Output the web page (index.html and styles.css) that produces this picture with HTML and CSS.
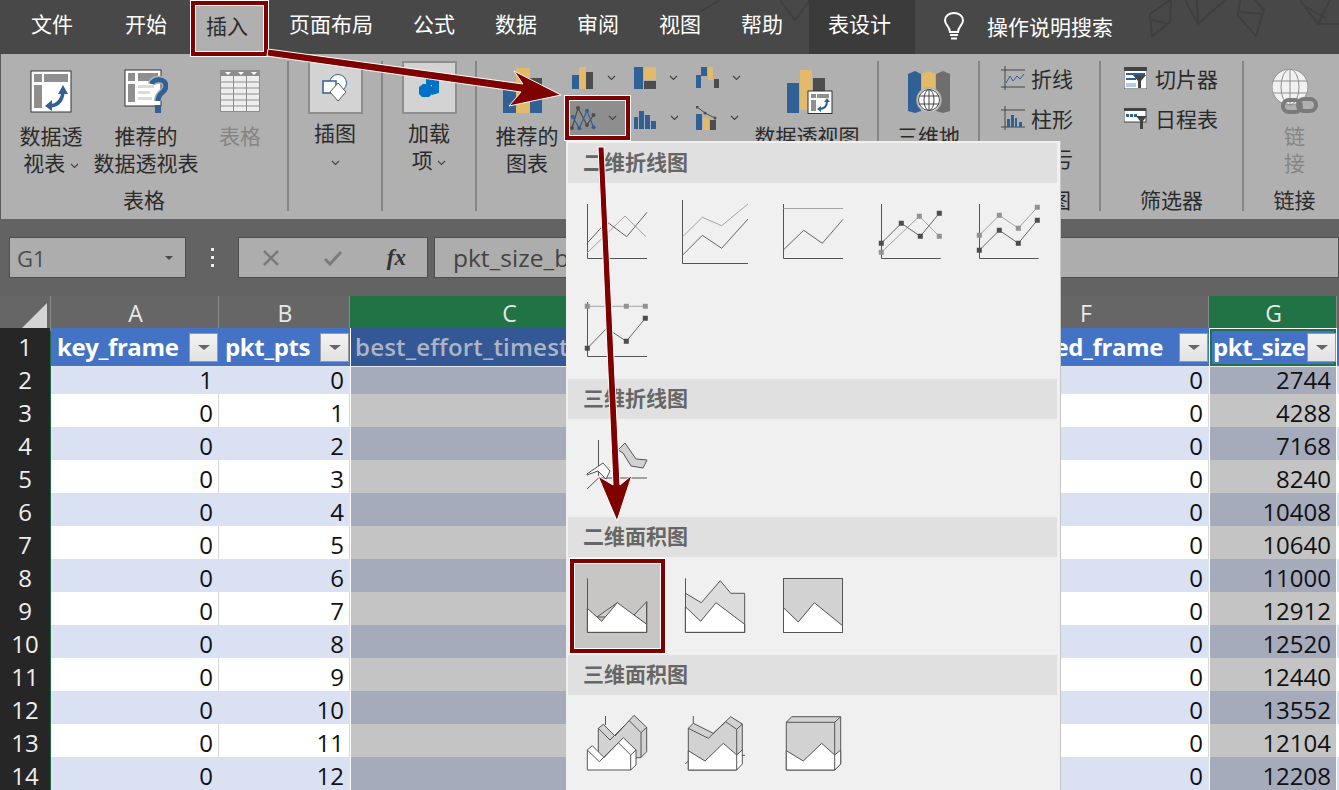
FILE: index.html
```html
<!DOCTYPE html>
<html lang="en">

<head>
    <meta charset="UTF-8">
    <meta name="viewport" content="width=device-width, initial-scale=1.0">
    <title>插入面积图</title>
    <link rel="stylesheet" href="styles.css">
</head>

<body>
    <div class="menu">
        <svg class="menu-art" width="1339" height="54" viewBox="0 0 1339 54">
            <g fill="none" stroke="#3f3f3f" stroke-width="2">
                <path d="M1150 14 L1170 0 M1150 14 L1152 36 L1170 22 L1171 0 M1152 20 L1168 24" />
                <path d="M1185 0 L1198 24 L1225 0 M1198 24 L1197 0" />
                <path d="M1240 0 L1238 16 L1256 36 L1264 10 L1255 0 M1240 12 L1262 14" />
                <path d="M1300 0 L1318 24 L1339 24 M1318 24 L1330 0 M1305 6 L1325 18" />
                <path d="M780 0 L795 20 L810 0 M700 12 L720 0" />
            </g>
        </svg>
        <div class="tab tab-file">文件</div>
        <div class="tab">开始</div>
        <div class="tab">插入</div>
        <div class="tab">页面布局</div>
        <div class="tab">公式</div>
        <div class="tab">数据</div>
        <div class="tab">审阅</div>
        <div class="tab">视图</div>
        <div class="tab">帮助</div>
        <div class="tab tab-active">表设计</div>
        <div class="search">
            <svg width="22" height="29" viewBox="0 0 22 29" fill="none" stroke="#fff" stroke-width="2">
                <path d="M7 20 C7 15 2 13 2 8.500 C2 4 6 1 11 1 C16 1 20 4 20 8.500 C20 13 15 15 15 20 Z" />
                <path d="M7 23 H15 M8 26.500 H14" />
            </svg>
            <span>操作说明搜索</span>
        </div>
    </div>

    <div class="ribbon">
        <div class="group group-table">
            <div class="group-body">
                <div class="big-btn btn-pivot">
                    <div class="big-icon">
                        <svg width="42" height="43" viewBox="0 0 42 43">
                            <rect x="1" y="1" width="40" height="41" fill="#fff" stroke="#333" />
                            <path d="M4 4 H12 V12 H4 Z M14 4 H38 V12 H14 Z M4 15 H12 V38 H4 Z" fill="#8f8f8f" />
                            <path d="M18 36 C26 36 32 32 33 22" fill="none" stroke="#2f6196" stroke-width="3.500" />
                            <path d="M28 24 L33 15 L38 24 Z M22 30 L15 36 L22 41 Z" fill="#2f6196" />
                        </svg>
                    </div>
                    <div class="big-label">数据透<br>视表 <svg class="chev" width="9" height="6" viewBox="0 0 9 6"><path d="M1 1 L4.500 4.500 L8 1" /></svg></div>
                </div>
                <div class="big-btn btn-recommend">
                    <div class="big-icon">
                        <svg width="44" height="46" viewBox="0 0 44 46">
                            <rect x="1" y="1" width="36" height="36" fill="#fff" stroke="#333" />
                            <path d="M4 4 H11 V12 H4 Z M14 4 H34 V12 H14 Z M4 15 H11 V33 H4 Z" fill="#8f8f8f" />
                            <path d="M14 16 H30 V19 H14 Z M14 22 H26 V25 H14 Z M14 28 H28 V31 H14 Z" fill="#dadada" />
                            <path d="M28 15 C29 9 42 9 42 17 C42 24 34 23 34 32" fill="none" stroke="#b0b0b0" stroke-width="8" />
                            <path d="M28 15 C29 9 42 9 42 17 C42 24 34 23 34 32" fill="none" stroke="#2f6196" stroke-width="5" />
                            <rect x="31" y="36" width="6" height="8" fill="#2f6196" />
                        </svg>
                    </div>
                    <div class="big-label">推荐的<br>数据透视表</div>
                </div>
                <div class="big-btn btn-plain is-disabled">
                    <div class="big-icon">
                        <svg width="40" height="43" viewBox="0 0 40 43">
                            <rect x="0" y="0" width="40" height="42" fill="#8c8c8c" />
                            <rect x="1" y="6" width="38" height="35" fill="#eee" />
                            <path d="M13.500 6 V41 M26.500 6 V41 M1 12 H39 M1 18 H39 M1 24 H39 M1 30 H39 M1 36 H39" stroke="#8c8c8c" fill="none" />
                            <path d="M5 2 H11 L8 5 Z M18 2 H24 L21 5 Z M31 2 H37 L34 5 Z" fill="#fff" />
                        </svg>
                    </div>
                    <div class="big-label">表格</div>
                </div>
            </div>
            <div class="group-label">表格</div>
        </div>

        <div class="group group-illus">
            <div class="group-body">
                <div class="big-btn">
                    <div class="big-icon tall">
                        <div class="box-btn">
                            <svg width="26" height="28" viewBox="0 0 26 28">
                                <circle cx="16" cy="9" r="8.500" fill="#fff" stroke="#2f6196" />
                                <rect x="1" y="7" width="13" height="12" fill="#fff" stroke="#2f6196" stroke-width="1.500" />
                                <path d="M16 9 L24 18 L16 27 L8 18 Z" fill="#fff" stroke="#555" stroke-width="1" />
                            </svg>
                        </div>
                    </div>
                    <div class="big-label">插图<br><svg class="chev" width="9" height="6" viewBox="0 0 9 6"><path d="M1 1 L4.500 4.500 L8 1" /></svg></div>
                </div>
            </div>
        </div>

        <div class="group group-addin">
            <div class="group-body">
                <div class="big-btn">
                    <div class="big-icon tall">
                        <div class="box-btn">
                            <svg width="22" height="20" viewBox="0 0 22 20">
                                <path d="M8 1 H21 V15 L14 17 V7 H8 Z" fill="#0072c6" />
                                <path d="M5 6 H12 L14 9 V16 L11 19 H4 L1 16 V9 Z" fill="#0072c6" />
                            </svg>
                        </div>
                    </div>
                    <div class="big-label">加载<br>项 <svg class="chev" width="9" height="6" viewBox="0 0 9 6"><path d="M1 1 L4.500 4.500 L8 1" /></svg></div>
                </div>
            </div>
        </div>

        <div class="group group-charts">
            <div class="group-body">
                <div class="big-btn btn-recchart">
                    <div class="big-icon">
                        <svg width="48" height="48" viewBox="0 0 48 48">
                            <rect x="0" y="18" width="13" height="27" fill="#2f6196" />
                            <rect x="13" y="0" width="14" height="45" fill="#e3b96a" />
                            <rect x="27" y="10" width="12" height="35" fill="#4d4d4d" />
                            <rect x="27" y="28" width="12" height="17" fill="#2f6196" />
                        </svg>
                    </div>
                    <div class="big-label">推荐的<br>图表</div>
                </div>
                <div class="chart-types">
                    <div class="type-btn">
                        <svg width="22" height="22" viewBox="0 0 22 22"><rect x="0" y="8" width="7" height="14" fill="#2f6196" /><rect x="7" y="0" width="7" height="22" fill="#e3b96a" /><rect x="14" y="5" width="7" height="17" fill="#4d4d4d" /></svg>
                        <svg class="chev" width="9" height="6" viewBox="0 0 9 6"><path d="M1 1 L4.500 4.500 L8 1" /></svg>
                    </div>
                    <div class="type-btn">
                        <svg width="22" height="22" viewBox="0 0 22 22"><rect x="0" y="0" width="9" height="22" fill="#2f6196" /><rect x="10" y="0" width="12" height="13" fill="#e3b96a" /><rect x="10" y="14" width="12" height="8" fill="#4d4d4d" /></svg>
                        <svg class="chev" width="9" height="6" viewBox="0 0 9 6"><path d="M1 1 L4.500 4.500 L8 1" /></svg>
                    </div>
                    <div class="type-btn">
                        <svg width="23" height="22" viewBox="0 0 23 22"><rect x="0" y="8" width="5" height="13" fill="#2f6196" /><rect x="5" y="0" width="6" height="9" fill="#2f6196" /><rect x="12" y="0" width="5" height="13" fill="#e3b96a" /><rect x="18" y="12" width="5" height="9" fill="#4d4d4d" /></svg>
                        <svg class="chev" width="9" height="6" viewBox="0 0 9 6"><path d="M1 1 L4.500 4.500 L8 1" /></svg>
                    </div>
                    <div class="type-btn type-picked">
                        <svg width="26" height="25" viewBox="0 0 26 25" fill="none">
                            <path d="M2 22 L8 2 L17 19 L23.500 9" stroke="#4d4d4d" stroke-width="1.200" />
                            <path d="M2.700 10.700 L9.300 22.300 L17 4.700 L23.500 21.300" stroke="#2f6196" stroke-width="1.200" />
                            <g fill="#4d4d4d"><circle cx="2" cy="22" r="2" /><circle cx="8" cy="2" r="2" /><circle cx="17" cy="19" r="2" /><circle cx="23.500" cy="9" r="2" /></g>
                            <g fill="#2f6196"><circle cx="2.700" cy="10.700" r="2" /><circle cx="9.300" cy="22.300" r="2" /><circle cx="17" cy="4.700" r="2" /><circle cx="23.500" cy="21.300" r="2" /></g>
                        </svg>
                        <svg class="chev" width="9" height="6" viewBox="0 0 9 6"><path d="M1 1 L4.500 4.500 L8 1" /></svg>
                    </div>
                    <div class="type-btn">
                        <svg width="23" height="22" viewBox="0 0 23 22" fill="#2f6196"><rect x="0" y="10" width="4" height="12" /><rect x="5" y="4" width="5" height="18" /><rect x="11" y="8" width="5" height="14" /><rect x="17" y="14" width="5" height="8" /></svg>
                        <svg class="chev" width="9" height="6" viewBox="0 0 9 6"><path d="M1 1 L4.500 4.500 L8 1" /></svg>
                    </div>
                    <div class="type-btn">
                        <svg width="21" height="24" viewBox="0 0 21 24"><rect x="0" y="8" width="6" height="16" fill="#2f6196" /><rect x="7" y="12" width="6" height="12" fill="#e3b96a" /><rect x="14" y="14" width="6" height="10" fill="#4d4d4d" /><path d="M1 1 L9 7 L19 12" stroke="#4d4d4d" fill="none" /><circle cx="1" cy="1" r="1.500" fill="#4d4d4d" /><circle cx="9" cy="7" r="1.500" fill="#4d4d4d" /><circle cx="19" cy="12" r="1.500" fill="#4d4d4d" /></svg>
                        <svg class="chev" width="9" height="6" viewBox="0 0 9 6"><path d="M1 1 L4.500 4.500 L8 1" /></svg>
                    </div>
                </div>
                <div class="big-btn btn-pivotchart">
                    <div class="big-icon">
                        <svg width="46" height="44" viewBox="0 0 46 44">
                            <rect x="0" y="13" width="12" height="30" fill="#2f6196" />
                            <rect x="13" y="0" width="12" height="40" fill="#e3b96a" />
                            <rect x="26" y="8" width="12" height="20" fill="#4d4d4d" />
                            <rect x="21" y="21" width="24" height="22.500" fill="#fff" stroke="#333" />
                            <path d="M24 24 H29 V28 H24 Z M30 24 H42 V28 H30 Z M24 30 H29 V41 H24 Z" fill="#8f8f8f" />
                            <path d="M32 39 C37 39 40 36 40 31" fill="none" stroke="#2f6196" stroke-width="2" />
                            <path d="M37 32 L40 28 L43 32 Z M34 36 L30 39 L34 42 Z" fill="#2f6196" />
                        </svg>
                    </div>
                    <div class="big-label">数据透视图</div>
                </div>
            </div>
        </div>

        <div class="group group-map">
            <div class="group-body">
                <div class="big-btn">
                    <div class="big-icon">
                        <svg width="42" height="43" viewBox="0 0 42 43">
                            <path d="M0 4 L7 1 L13 4 V41 L7 43 L0 41 Z" fill="#2f6196" />
                            <path d="M14 4 L20 1 L27 4 V30 H14 Z" fill="#e3b96a" />
                            <path d="M28 4 L35 1 L42 4 V41 L35 43 L28 41 Z" fill="#6e6e6e" />
                            <circle cx="21" cy="30" r="12" fill="#fff" stroke="#b0b0b0" stroke-width="1.500" />
                            <g fill="none" stroke="#444">
                                <circle cx="21" cy="30" r="10.500" />
                                <ellipse cx="21" cy="30" rx="5" ry="10.500" />
                                <path d="M21 19.500 V40.500 M11 26 H31 M11 34 H31" />
                            </g>
                        </svg>
                    </div>
                    <div class="big-label">三维地</div>
                </div>
            </div>
        </div>

        <div class="group group-spark">
            <div class="group-body">
                <div class="list-col">
                    <div class="list-btn">
                        <svg width="24" height="24" viewBox="0 0 24 24" fill="none"><path d="M0 4 H24 M0 21 H24 M4 0 V24" stroke="#444" /><path d="M5 17 L9 10 L12 15 L16 10 L19 13 L23 8" stroke="#2f6196" /></svg>
                        <span>折线</span>
                    </div>
                    <div class="list-btn">
                        <svg width="24" height="24" viewBox="0 0 24 24"><path d="M0 4 H24 M0 21 H24 M4 0 V24" stroke="#444" fill="none" /><path d="M6 13 H9 V21 H6 Z M10 9 H13 V21 H10 Z M14 12 H16 V21 H14 Z M18 16 H21 V21 H18 Z" fill="#2f6196" /></svg>
                        <span>柱形</span>
                    </div>
                    <div class="list-btn">
                        <svg width="24" height="24" viewBox="0 0 24 24"><path d="M0 12 H24 M4 0 V24" stroke="#444" fill="none" /></svg>
                        <span>盈亏</span>
                    </div>
                </div>
            </div>
            <div class="group-label">迷你图</div>
        </div>

        <div class="group group-filter">
            <div class="group-body">
                <div class="list-col">
                    <div class="list-btn">
                        <svg width="23" height="22" viewBox="0 0 23 22">
                            <rect x="0" y="0" width="23" height="22" fill="#fff" stroke="#444" />
                            <rect x="0" y="0" width="23" height="4" fill="#444" />
                            <path d="M2 6 H21 V8 H2 Z M2 11 H12 V13 H2 Z" fill="#2f6196" />
                            <path d="M2 16 H12 V20 H2 Z" fill="#b5cbe0" />
                            <path d="M9 8 H22 L17 14 V21 H14 V14 Z" fill="#444" />
                        </svg>
                        <span>切片器</span>
                    </div>
                    <div class="list-btn">
                        <svg width="23" height="22" viewBox="0 0 23 22">
                            <rect x="0" y="2" width="22" height="13" fill="#fff" stroke="#444" />
                            <rect x="0" y="1" width="22" height="3" fill="#444" />
                            <path d="M2 7 H5 V10 H2 Z M6 7 H9 V10 H6 Z M10 7 H13 V10 H10 Z" fill="#2f6196" />
                            <path d="M12 9 H23 L19 14 V22 H16 V14 Z" fill="#444" />
                        </svg>
                        <span>日程表</span>
                    </div>
                </div>
            </div>
            <div class="group-label">筛选器</div>
        </div>

        <div class="group group-link">
            <div class="group-body">
                <div class="big-btn is-disabled">
                    <div class="big-icon">
                        <svg width="46" height="46" viewBox="0 0 46 46">
                            <circle cx="18" cy="18" r="18" fill="#f1f1f1" stroke="#8f8f8f" />
                            <g fill="none" stroke="#8f8f8f">
                                <ellipse cx="18" cy="18" rx="9" ry="18" />
                                <path d="M18 0 V36 M1 12 H35 M1 24 H35" />
                            </g>
                            <g fill="none" stroke="#7a7a7a" stroke-width="4">
                                <rect x="11" y="31" width="18" height="12" rx="6" />
                                <rect x="26" y="30" width="18" height="12" rx="6" />
                            </g>
                        </svg>
                    </div>
                    <div class="big-label">链<br>接</div>
                </div>
            </div>
            <div class="group-label">链接</div>
        </div>
    </div>

    <div class="formula-bar">
        <div class="name-box">
            <span>G1</span>
            <i class="caret"></i>
        </div>
        <div class="dots"><i></i><i></i><i></i></div>
        <div class="fx-box">
            <svg width="16" height="16" viewBox="0 0 16 16"><path d="M1 1 L15 15 M15 1 L1 15" stroke="#7c7c7c" stroke-width="2.500" /></svg>
            <svg width="20" height="16" viewBox="0 0 20 16"><path d="M2 9 L7 14 L18 2" stroke="#7c7c7c" stroke-width="3" fill="none" /></svg>
            <span class="fx">fx</span>
        </div>
        <div class="formula-input">pkt_size_bytes</div>
    </div>

    <div class="sheet">
        <div class="row col-heads">
            <div class="corner"><i></i></div>
            <div>A</div>
            <div>B</div>
            <div class="is-sel">C</div>
            <div>D</div>
            <div>E</div>
            <div>F</div>
            <div class="is-sel">G</div>
            <div></div>
        </div>
        <div class="row table-head">
            <div class="num">1</div>
            <div class="th"><span>key_frame</span><i class="filter"></i></div>
            <div class="th"><span>pkt_pts</span><i class="filter"></i></div>
            <div class="th th-sel"><span>best_effort_timestamp</span></div>
            <div class="th th-sel"></div>
            <div class="th"></div>
            <div class="th th-f"><span>interlaced_frame</span><i class="filter"></i></div>
            <div class="th th-active"><span>pkt_size</span><i class="filter"></i></div>
            <div class="th"></div>
        </div>
        <div class="row data"><div class="num">2</div><div>1</div><div>0</div><div class="c"></div><div></div><div></div><div>0</div><div class="g">2744</div><div></div></div>
        <div class="row data"><div class="num">3</div><div>0</div><div>1</div><div class="c"></div><div></div><div></div><div>0</div><div class="g">4288</div><div></div></div>
        <div class="row data"><div class="num">4</div><div>0</div><div>2</div><div class="c"></div><div></div><div></div><div>0</div><div class="g">7168</div><div></div></div>
        <div class="row data"><div class="num">5</div><div>0</div><div>3</div><div class="c"></div><div></div><div></div><div>0</div><div class="g">8240</div><div></div></div>
        <div class="row data"><div class="num">6</div><div>0</div><div>4</div><div class="c"></div><div></div><div></div><div>0</div><div class="g">10408</div><div></div></div>
        <div class="row data"><div class="num">7</div><div>0</div><div>5</div><div class="c"></div><div></div><div></div><div>0</div><div class="g">10640</div><div></div></div>
        <div class="row data"><div class="num">8</div><div>0</div><div>6</div><div class="c"></div><div></div><div></div><div>0</div><div class="g">11000</div><div></div></div>
        <div class="row data"><div class="num">9</div><div>0</div><div>7</div><div class="c"></div><div></div><div></div><div>0</div><div class="g">12912</div><div></div></div>
        <div class="row data"><div class="num">10</div><div>0</div><div>8</div><div class="c"></div><div></div><div></div><div>0</div><div class="g">12520</div><div></div></div>
        <div class="row data"><div class="num">11</div><div>0</div><div>9</div><div class="c"></div><div></div><div></div><div>0</div><div class="g">12440</div><div></div></div>
        <div class="row data"><div class="num">12</div><div>0</div><div>10</div><div class="c"></div><div></div><div></div><div>0</div><div class="g">13552</div><div></div></div>
        <div class="row data"><div class="num">13</div><div>0</div><div>11</div><div class="c"></div><div></div><div></div><div>0</div><div class="g">12104</div><div></div></div>
        <div class="row data"><div class="num">14</div><div>0</div><div>12</div><div class="c"></div><div></div><div></div><div>0</div><div class="g">12208</div><div></div></div>
    </div>

    <!-- Chart type dropdown -->
    <div class="dropdown">
        <div class="drop-title">二维折线图</div>
        <div class="drop-grid">
            <div class="drop-item">
                <svg viewBox="0 0 98 98">
                    <path class="axis" d="M19.500 21 V75.500 H79" />
                    <path class="ln-light" d="M19 70 L57 33 L78 53.700" />
                    <path class="ln-dark" d="M19 60.300 L38.700 38.700 L58.700 53.700 L79 29.300" />
                </svg>
            </div>
            <div class="drop-item">
                <svg viewBox="0 0 98 98">
                    <path class="axis" d="M16.500 17 V80.500 H82" />
                    <path class="ln-light" d="M16.700 53.700 L36.300 34.300 L55.700 42.700 L82 21" />
                    <path class="ln-dark" d="M16.700 72 L36.300 52.300 L55.700 65.300 L82 36" />
                </svg>
            </div>
            <div class="drop-item">
                <svg viewBox="0 0 98 98">
                    <path class="axis" d="M19.500 21 V75.500 H79" />
                    <path class="ln-light" d="M19.500 25.500 H79" />
                    <path class="ln-dark" d="M19.300 67 L39.700 47.300 L58.300 60.300 L79 36.300" />
                </svg>
            </div>
            <div class="drop-item">
                <svg viewBox="0 0 98 98">
                    <path class="axis" d="M19.500 21 V75.500 H78.700" />
                    <path class="ln-light" d="M19.300 69.300 L57.300 33.300 L77.300 53.300" />
                    <path class="ln-dark" d="M19.300 60.300 L39.300 40.300 L58.300 53.300 L77.300 30.300" />
                    <path class="dot-light" d="M16.800 66.800 h5 v5 h-5 Z M54.800 30.800 h5 v5 h-5 Z M74.800 50.800 h5 v5 h-5 Z" />
                    <path class="dot-dark" d="M16.800 57.800 h5 v5 h-5 Z M36.800 37.800 h5 v5 h-5 Z M55.800 50.800 h5 v5 h-5 Z M74.800 27.800 h5 v5 h-5 Z" />
                </svg>
            </div>
            <div class="drop-item">
                <svg viewBox="0 0 98 98">
                    <path class="axis" d="M19.500 21 V75.500 H78.700" />
                    <path class="ln-light" d="M19.300 52.300 L39.300 32.300 L58.300 45.300 L77.300 24.300" />
                    <path class="ln-dark" d="M19.300 67.300 L39.300 47.300 L58.300 60.300 L77.300 37.300" />
                    <path class="dot-light" d="M16.800 49.800 h5 v5 h-5 Z M36.800 29.800 h5 v5 h-5 Z M55.800 42.800 h5 v5 h-5 Z M74.800 21.800 h5 v5 h-5 Z" />
                    <path class="dot-dark" d="M16.800 64.800 h5 v5 h-5 Z M36.800 44.800 h5 v5 h-5 Z M55.800 57.800 h5 v5 h-5 Z M74.800 34.800 h5 v5 h-5 Z" />
                </svg>
            </div>
            <div class="drop-item">
                <svg viewBox="0 0 98 98">
                    <path class="axis" d="M19.500 21 V75.500 H79" />
                    <path class="ln-light" d="M19.300 25.300 H77.300" />
                    <path class="ln-dark" d="M19.300 67.300 L38.700 47.300 L58.300 60.300 L77.300 37.300" />
                    <path class="dot-light" d="M16.800 22.800 h5 v5 h-5 Z M55.800 22.800 h5 v5 h-5 Z M74.800 22.800 h5 v5 h-5 Z" />
                    <path class="dot-dark" d="M16.800 64.800 h5 v5 h-5 Z M55.800 57.800 h5 v5 h-5 Z M74.800 34.800 h5 v5 h-5 Z" />
                </svg>
            </div>
        </div>

        <div class="drop-title">三维折线图</div>
        <div class="drop-grid">
            <div class="drop-item">
                <svg viewBox="0 0 98 98">
                    <path class="axis" d="M30.500 21 V59 H79 M30.500 59 L19 70" />
                    <path class="area-mid" d="M50 31 L57 24 L68 40 L79 41 L75 49 L63 47 L55 34 Z" />
                    <path class="area-white" d="M19 55 L35 44 L42 52 L38 60 L30 52 L19 56 Z" />
                </svg>
            </div>
        </div>

        <div class="drop-title">二维面积图</div>
        <div class="drop-grid">
            <div class="drop-item is-picked">
                <svg viewBox="0 0 98 98">
                    <path class="area-mid" d="M29 60 L49.300 45.700 L38 60 Z M66 58 L78.700 44.700 V67.300 Z" />
                    <path class="area-white" d="M19.300 51.300 L33.700 64.300 L49.300 45.700 L78.700 67.300 V75.300 H19.300 Z" />
                    <path class="axis" d="M19.500 21.300 V75.500 H78.700 V44.700" />
                </svg>
            </div>
            <div class="drop-item">
                <svg viewBox="0 0 98 98">
                    <path class="area-light" d="M19.300 36.300 L35.300 45.700 L54.300 23.700 L64.700 36.300 H78.700 V67.300 L50 45.700 L34.700 64.300 L19.300 49.700 Z" />
                    <path class="area-white" d="M19.300 49.700 L34.700 64.300 L50 45.700 L78.700 67.300 V75.300 H19.300 Z" />
                    <path class="axis" d="M19.500 21.300 V75.500 H78.700 V36.300 H64.700 L54.300 23.700 L35.300 45.700 L19.500 36.300" />
                </svg>
            </div>
            <div class="drop-item">
                <svg viewBox="0 0 98 98">
                    <rect class="area-mid" x="19.500" y="21.500" width="59" height="54" />
                    <path class="area-white" d="M19.500 50.700 L34.300 65 L50.300 45.700 L78.500 68.700 V75.500 H19.500 Z" />
                </svg>
            </div>
        </div>

        <div class="drop-title">三维面积图</div>
        <div class="drop-grid">
            <div class="drop-item">
                <svg viewBox="0 0 98 98">
                    <path class="axis" d="M37.500 21 V30" />
                    <path class="area-mid" d="M30.300 33.300 L35.300 29.300 L47 41 L66 20.300 L78.700 32.300 V56.700 L72.700 62.700 H30.300 Z" />
                    <path class="axis" d="M30.300 33.300 L42 45 L61.300 25.700 L73 37.700 V62.700 M78.700 32.300 L73 37.700" />
                    <path class="area-white" d="M19.300 55 L24.300 50.700 L36 62.500 L55.300 42.700 L68 55 V70 L62.700 75 H19.300 Z" />
                    <path class="axis" d="M19.300 55 L31.300 66.700 L50.300 47.700 L62.700 60 V75 M68 55 L62.700 60" />
                </svg>
            </div>
            <div class="drop-item">
                <svg viewBox="0 0 98 98">
                    <path class="axis" d="M27.300 21 V28.300 M19.300 69 L22.300 66 M76.300 60.300 H79" />
                    <path class="area-mid" d="M22.300 33.300 L27.300 28.300 L47.300 38.300 L64.700 21.700 L76.300 29 V55 L70.700 60 V75 H22.300 Z" />
                    <path class="axis" d="M22.300 33.300 L42.300 43.300 L59.700 26.700 L70.700 34.300 V60 M76.300 29 L70.700 34.300" />
                    <path class="area-white" d="M22.300 55.700 L39 66 L57.300 48.300 L70.700 60 L76.300 55 V69 L70.700 75 H22.300 Z" />
                    <path class="axis" d="M70.700 60 V75" />
                </svg>
            </div>
            <div class="drop-item">
                <svg viewBox="0 0 98 98">
                    <path class="area-mid" d="M22.300 27.300 L27.700 21.700 H76.700 V69 L70.700 75 H22.300 Z" />
                    <path class="axis" d="M22.300 27.300 H70.700 V75 M70.700 27.300 L76.700 21.700" />
                    <path class="area-white" d="M22.300 55.700 L39.300 66 L57.700 48.300 L70.700 60 L76.700 55 V69 L70.700 75 H22.300 Z" />
                    <path class="axis" d="M70.700 60 V75" />
                </svg>
            </div>
        </div>
    </div>

    <!-- Callouts drawn over the screenshot -->
    <div class="mark mark-tab">插入</div>
    <svg class="arrows" width="1339" height="790" viewBox="0 0 1339 790">
        <path class="arrow" d="M268 49 L523 84 L514 71 L561 95 L509 106 L521 92 L267 56 Z" />
        <path class="arrow" d="M598 147 L604 147 L620 485 L632 475 L617 521 L598 476 L613 485 Z" />
    </svg>
</body>

</html>
```

FILE: styles.css
```css
* {
    margin: 0;
    padding: 0;
    box-sizing: border-box;
}

html,
body {
    width: 1339px;
    height: 790px;
    overflow: hidden;
}

body {
    position: relative;
    background: #636363;
    font-family: "Noto Sans CJK SC", "Noto Sans", sans-serif;
    font-size: 21px;
    color: #2b2b2b;
}

/* Menu bar */
.menu {
    position: relative;
    display: flex;
    align-items: stretch;
    height: 54px;
    background: #484848;
    color: #fff;
}

.menu-art {
    position: absolute;
    top: 0;
    left: 0;
}

.tab {
    position: relative;
    padding: 0 20px;
    line-height: 47px;
}

.tab-file {
    padding: 0 32px 0 31px;
}

.tab-active {
    margin-left: 6px;
    padding: 0 24px 0 19px;
    background: #3b3b3b;
}

.search {
    position: relative;
    display: flex;
    align-items: center;
    gap: 22px;
    margin-left: 28px;
    padding-bottom: 2px;
}

/* Ribbon */
.ribbon {
    display: flex;
    height: 165px;
    padding: 7px 0 8px;
    background: #b0b0b0;
    border-left: 1px solid #5a5a5a;
}

.group {
    display: flex;
    flex-direction: column;
    height: 150px;
    border-right: 2px solid #868686;
}

.group-body {
    display: flex;
    flex: 1;
    min-height: 0;
}

.group-label {
    height: 20px;
    line-height: 16px;
    text-align: center;
}

.group-table { width: 288px; }
.group-illus { width: 94px; }
.group-addin { width: 94px; }
.group-charts { width: 402px; }
.group-map { width: 101px; }
.group-spark { width: 121px; }
.group-filter { width: 143px; }
.group-link { width: 95px; padding-left: 6px; border-right: none; }

.big-btn {
    display: flex;
    flex-direction: column;
    align-items: center;
    flex: 1;
}

.big-icon {
    display: flex;
    justify-content: center;
    align-items: center;
    height: 61px;
    flex: none;
}

.big-icon.tall {
    height: 58px;
    align-items: flex-start;
}

.big-label {
    line-height: 27px;
    text-align: center;
    white-space: nowrap;
}

.is-disabled .big-label {
    color: #858585;
}

.chev {
    fill: none;
    stroke: #444;
    stroke-width: 1.200;
    vertical-align: 2px;
}

.btn-pivot { flex: none; width: 92px; margin-left: 4px; }
.btn-recommend { flex: none; width: 106px; margin-left: -4px; }
.btn-plain { flex: none; width: 70px; margin-left: 6px; }

.box-btn {
    display: flex;
    justify-content: center;
    align-items: center;
    width: 55px;
    height: 53px;
    background: #d3d3d3;
    border: 2px solid #8e8e8e;
}

.btn-recchart { flex: none; width: 88px; padding-left: 12px; }

.chart-types {
    display: grid;
    grid-template-columns: repeat(3, 62px);
    grid-auto-rows: 34px;
    row-gap: 6px;
    flex: none;
    width: 186px;
    align-content: start;
}

.type-btn {
    position: relative;
    display: flex;
    align-items: center;
    gap: 13px;
    padding-left: 7px;
}

.type-picked {
    height: 44px;
    margin: -5px -3px 0 0;
    padding-left: 1px;
    gap: 12px;
    background: #8e8e8e;
    border: 4px solid #7f0000;
    outline: 1px solid #fff;
    box-shadow: inset 0 0 0 1px #fff;
    z-index: 2;
}

.btn-pivotchart { flex: none; width: 112px; }
.btn-pivotchart .big-icon { padding-left: 6px; }

.list-col {
    display: flex;
    flex-direction: column;
    gap: 6px;
}

.list-btn {
    display: flex;
    align-items: center;
    gap: 6px;
    height: 34px;
    white-space: nowrap;
}

.group-spark .list-col { padding-left: 21px; }
.group-filter .list-col { padding-left: 23px; }
.group-filter .list-btn { gap: 8px; }

/* Formula bar */
.formula-bar {
    display: flex;
    align-items: center;
    height: 77px;
    padding: 0 0 0 9px;
    background: #636363;
}

.name-box {
    display: flex;
    justify-content: space-between;
    align-items: center;
    width: 177px;
    height: 41px;
    padding: 0 12px 0 7px;
    background: #adadad;
    border: 1px solid #4e4e4e;
    font-family: "Open Sans", sans-serif;
    font-size: 22px;
    color: #4c4c4c;
}

.caret {
    width: 0;
    height: 0;
    border-left: 4px solid transparent;
    border-right: 4px solid transparent;
    border-top: 4px solid #4a4a4a;
}

.dots {
    display: flex;
    flex-direction: column;
    gap: 5px;
    width: 52px;
    align-items: center;
}

.dots i {
    width: 3px;
    height: 3px;
    background: #eee;
}

.fx-box {
    display: flex;
    align-items: center;
    justify-content: space-between;
    width: 190px;
    height: 41px;
    padding: 0 21px 0 24px;
    background: #adadad;
    border: 1px solid #4e4e4e;
}

.fx {
    font-family: "Liberation Serif", serif;
    font-style: italic;
    font-weight: bold;
    font-size: 23px;
    color: #333;
}

.formula-input {
    flex: 1;
    height: 41px;
    margin-left: 6px;
    padding-left: 18px;
    line-height: 39px;
    background: #adadad;
    border: 1px solid #4e4e4e;
    font-family: "Open Sans", sans-serif;
    font-size: 24.500px;
    color: #444;
}

/* Sheet */
.row {
    display: grid;
    grid-template-columns: 51px 168px 131px 318px 147px 147px 247px 128px 2px;
    height: 33px;
}

.col-heads {
    height: 32px;
    background: #666;
    color: #e8e8e8;
    font-family: "Open Sans", sans-serif;
    font-size: 23px;
    line-height: 35px;
    text-align: center;
}

.col-heads > div {
    padding-left: 2px;
    border-right: 1px solid #8a8a8a;
}

.col-heads .is-sel {
    background: #217346;
    color: #e6e6e6;
}

.corner {
    position: relative;
}

.corner i {
    position: absolute;
    right: 3px;
    bottom: 3px;
    width: 0;
    height: 0;
    border-left: 25px solid transparent;
    border-bottom: 25px solid #d4d4d4;
}

.num {
    background: #262626;
    border-right: 1px solid #1d6b41;
    border-bottom: 1px solid #8a8a8a;
    color: #eee;
    text-align: center;
    font-family: "Open Sans", sans-serif;
    font-size: 24px;
    line-height: 38px;
}

.table-head,
.data {
    font-family: "Open Sans", sans-serif;
    font-size: 24px;
    line-height: 38px;
}

.th {
    position: relative;
    display: flex;
    justify-content: space-between;
    align-items: center;
    overflow: hidden;
    padding-left: 6px;
    background: #4472c4;
    border-bottom: 1px solid #e6e6e6;
    color: #fff;
    font-size: 24px;
    font-weight: 700;
    letter-spacing: -0.400px;
    white-space: nowrap;
}

.th-sel {
    background: #345796;
    color: #adb4c4;
    padding-left: 4px;
    font-weight: 600;
    letter-spacing: 0.200px;
    border-left: 1px solid #fff;
}

.th-f {
    padding-left: 0;
    justify-content: flex-end;
    gap: 16px;
}

.th-active {
    padding-left: 4px;
    background: #4472c4;
    outline: 2px solid #217346;
    outline-offset: -3px;
    box-shadow: inset 0 0 0 1px #fff;
}

.filter {
    position: relative;
    flex: none;
    width: 29px;
    height: 29px;
    margin-right: 1px;
    background: linear-gradient(#f3f3f3, #e2e2e2);
    border: 1px solid #9a9a9a;
}

.filter::after {
    content: "";
    position: absolute;
    top: 11px;
    left: 8px;
    width: 0;
    height: 0;
    border-left: 6px solid transparent;
    border-right: 6px solid transparent;
    border-top: 5px solid #666;
}

.data > div {
    padding-right: 5px;
    text-align: right;
    color: #111;
    background: #fff;
    border-bottom: 1px solid #8ea9db;
    border-right: 1px solid #d8d8d8;
}

.data:nth-child(odd) > div {
    background: #d9e1f2;
    border-right-color: #d9e1f2;
}

.data > .num,
.data:nth-child(odd) > .num {
    padding-right: 0;
    text-align: center;
    color: #eee;
    background: #262626;
    border-bottom: 1px solid #8a8a8a;
    border-right: 1px solid #1d6b41;
}

.data > .c,
.data > .g {
    background: #c4c4c4;
    border-left: 1px solid #fff;
    border-right: 1px solid #fff;
}

.data:nth-child(odd) > .c,
.data:nth-child(odd) > .g {
    background: #a5abbb;
    border-right-color: #fff;
}

/* Dropdown */
.dropdown {
    position: absolute;
    top: 141px;
    left: 566px;
    width: 495px;
    height: 649px;
    overflow: hidden;
    padding: 2px 3px 0 2px;
    background: #f0f0f0;
    border-right: 1px solid #c6c6c6;
    z-index: 3;
}

.drop-title {
    height: 40px;
    padding-left: 15px;
    line-height: 37px;
    background: #e0e0e0;
    color: #666;
    font-weight: 700;
}

.drop-grid {
    display: grid;
    grid-template-columns: repeat(5, 98px);
    grid-auto-rows: 98px;
}

.drop-item svg {
    display: block;
    width: 98px;
    height: 98px;
}

.drop-item.is-picked {
    position: relative;
    margin: 2px 1px 2px 2px;
    background: #c8c6c4;
    border: 4px solid #7f0000;
    outline: 1px solid #fff;
    box-shadow: inset 0 0 0 1px #fff;
}

.is-picked svg {
    margin: -6px 0 0 -6px;
}

.axis {
    fill: none;
    stroke: #555;
    stroke-width: 1;
}

.ln-dark {
    fill: none;
    stroke: #666;
    stroke-width: 1;
}

.ln-light {
    fill: none;
    stroke: #a3a3a3;
    stroke-width: 1;
}

.dot-dark { fill: #4d4d4d; }
.dot-light { fill: #929292; }

.area-mid {
    fill: #d2d2d2;
    stroke: #555;
    stroke-width: 1;
}

.area-light {
    fill: #dcdcdc;
}

.area-white {
    fill: #fff;
    stroke: #555;
    stroke-width: 1;
}

/* Callouts */
.mark {
    position: absolute;
    top: 1px;
    left: 191px;
    width: 77px;
    height: 55px;
    padding-left: 11px;
    line-height: 40px;
    background: #b0b0b0;
    border: 4px solid #7f0000;
    outline: 1px solid #fff;
    box-shadow: inset 0 0 0 1px #fff;
    z-index: 4;
}

.arrows {
    position: absolute;
    top: 0;
    left: 0;
    z-index: 5;
    pointer-events: none;
}

.arrow {
    fill: #7f0000;
    stroke: #fff;
    stroke-width: 1;
}
```
